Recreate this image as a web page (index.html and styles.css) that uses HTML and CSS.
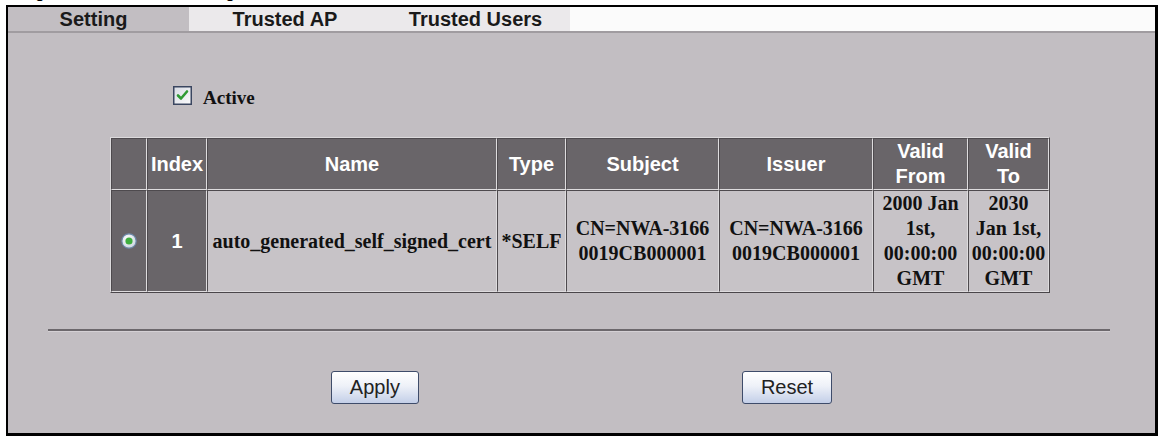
FILE: index.html
```html
<!DOCTYPE html>
<html>
<head>
<meta charset="utf-8">
<link rel="stylesheet" href="styles.css">
</head>
<body>
<div class="caption"><span>Figure 66 Certificates: Setting</span></div>
<div class="frame">
  <div class="tabs">
    <div class="tab tab-active">Setting</div>
    <div class="tab tab-ap">Trusted AP</div>
    <div class="tab tab-users">Trusted Users</div>
    <div class="tab-fill"></div>
  </div>
  <div class="content">
    <label class="active-row">
      <svg class="checkbox" width="19" height="19" viewBox="0 0 19 19">
        <defs>
          <linearGradient id="cbg" x1="0" y1="0" x2="1" y2="1">
            <stop offset="0" stop-color="#d7dbe3"/>
            <stop offset="1" stop-color="#fbfbfc"/>
          </linearGradient>
        </defs>
        <rect x="0.75" y="0.75" width="17.5" height="17.5" fill="url(#cbg)" stroke="#3a4660" stroke-width="1.5"/>
        <path d="M5 9.5 L8 12.5 L14 5.5" fill="none" stroke="#2f9a34" stroke-width="2.6" stroke-linecap="round" stroke-linejoin="round"/>
      </svg>
      <span class="active-label">Active</span>
    </label>

    <table class="cert-table">
      <colgroup>
        <col class="c-radio"><col class="c-index"><col class="c-name"><col class="c-type">
        <col class="c-subject"><col class="c-issuer"><col class="c-from"><col class="c-to">
      </colgroup>
      <thead>
        <tr>
          <th></th>
          <th>Index</th>
          <th>Name</th>
          <th>Type</th>
          <th>Subject</th>
          <th>Issuer</th>
          <th>Valid<br>From</th>
          <th>Valid<br>To</th>
        </tr>
      </thead>
      <tbody>
        <tr>
          <td class="dark">
            <svg class="radio" width="16" height="16" viewBox="0 0 16 16">
              <defs>
                <radialGradient id="rbg" cx="0.4" cy="0.35" r="0.7">
                  <stop offset="0" stop-color="#ffffff"/>
                  <stop offset="1" stop-color="#c9d3de"/>
                </radialGradient>
              </defs>
              <circle cx="8" cy="8" r="7.2" fill="url(#rbg)" stroke="#6d88a8" stroke-width="1.2"/>
              <circle cx="8" cy="8" r="3.6" fill="#3fae3f"/>
            </svg>
          </td>
          <td class="dark idx">1</td>
          <td>auto_generated_self_signed_cert</td>
          <td>*SELF</td>
          <td>CN=NWA-3166<br>0019CB000001</td>
          <td>CN=NWA-3166<br>0019CB000001</td>
          <td>2000 Jan<br>1st,<br>00:00:00<br>GMT</td>
          <td>2030<br>Jan 1st,<br>00:00:00<br>GMT</td>
        </tr>
      </tbody>
    </table>

    <div class="divider"></div>

    <div class="buttons">
      <button class="btn">Apply</button>
      <button class="btn">Reset</button>
    </div>
  </div>
</div>
</body>
</html>
```
FILE: styles.css
```css
html, body {
  margin: 0;
  padding: 0;
  background: #ffffff;
}

body {
  width: 1162px;
  height: 437px;
  overflow: hidden;
}

.caption {
  height: 5px;
  overflow: hidden;
  font-family: "Liberation Sans", Arial, sans-serif;
  font-weight: bold;
  font-size: 15px;
  line-height: 16px;
  color: #000;
  padding-left: 22px;
}

.caption span {
  display: block;
  margin-top: -15px;
  white-space: nowrap;
}

.frame {
  margin-left: 6px;
  width: 1147px;
  height: 426px;
  border-style: solid;
  border-color: #000;
  border-width: 2px 3px 3px 2px;
  background: #c2bec2;
  display: flex;
  flex-direction: column;
}

.tabs {
  display: flex;
  height: 24px;
  border-bottom: 2px solid #a09ca0;
  background: #fafafa;
}

.tab {
  font-family: "Liberation Sans", Arial, sans-serif;
  font-weight: bold;
  font-size: 20px;
  line-height: 24px;
  color: #1a1a1a;
  text-align: center;
  background: #ebe9eb;
}

.tab-active {
  width: 181px;
  background: #c2bec2;
  padding-right: 10px;
  box-sizing: border-box;
}

.tab-ap {
  width: 192px;
}

.tab-users {
  width: 189px;
}

.tab-fill {
  flex: 1;
  background: #fbfbfb;
}

.content {
  flex: 1;
  display: flex;
  flex-direction: column;
}

.active-row {
  display: flex;
  align-items: center;
  gap: 11px;
  margin: 52px 0 0 165px;
  height: 20px;
}

.checkbox {
  display: block;
}

.active-label {
  font-family: "Liberation Serif", "Times New Roman", serif;
  font-weight: bold;
  font-size: 19px;
  line-height: 20px;
  color: #111;
  padding-top: 5px;
}

.cert-table {
  margin: 32px 0 0 102px;
  width: 940px;
  table-layout: fixed;
  border-collapse: separate;
  border-spacing: 0;
  border-style: solid;
  border-width: 1px;
  border-color: #dcdadc #4a464a #4a464a #dcdadc;
}

.c-radio { width: 36px; }
.c-index { width: 60px; }
.c-name { width: 290px; }
.c-type { width: 69px; }
.c-subject { width: 153px; }
.c-issuer { width: 154px; }
.c-from { width: 95px; }
.c-to { width: 81px; }

.cert-table th,
.cert-table td {
  padding: 0;
  border-style: solid;
  border-width: 1px;
  border-color: #4e4a4e #dedcde #dedcde #4e4a4e;
  text-align: center;
  vertical-align: middle;
  line-height: 25px;
  white-space: nowrap;
  overflow: hidden;
}

.cert-table th {
  background: #696569;
  color: #ffffff;
  font-family: "Liberation Sans", Arial, sans-serif;
  font-weight: bold;
  font-size: 20px;
}

.cert-table td {
  background: #c7c3c7;
  color: #111111;
  font-family: "Liberation Serif", "Times New Roman", serif;
  font-weight: bold;
  font-size: 20px;
}

.cert-table td.dark {
  background: #696569;
}

.cert-table td.idx {
  color: #ffffff;
  font-family: "Liberation Sans", Arial, sans-serif;
}

.radio {
  display: block;
  margin: 0 auto;
}

.divider {
  margin: 36px 0 0 40px;
  width: 1062px;
  height: 2px;
  background: #6c686c;
  box-shadow: 0 1px 0 #d4d0d4;
}

.buttons {
  display: flex;
  justify-content: center;
  gap: 323px;
  margin-top: 40px;
}

.btn {
  height: 33px;
  padding: 0 18px;
  border: 1px solid #3e4c6a;
  border-radius: 3px;
  background: linear-gradient(#ffffff 0%, #eef1f8 45%, #c3cfe8 100%);
  font-family: "Liberation Sans", Arial, sans-serif;
  font-size: 20px;
  color: #222;
  line-height: 31px;
}
```
